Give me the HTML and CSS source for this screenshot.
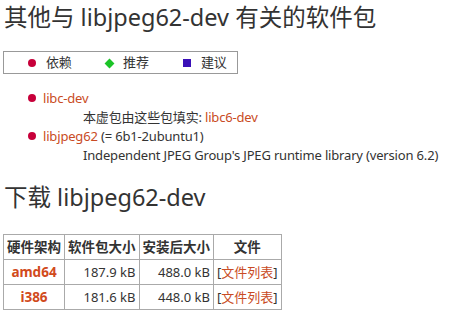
FILE: index.html
```html
<!DOCTYPE html>
<html lang="zh-CN">
<head>
    <meta charset="UTF-8">
    <title>libjpeg62-dev</title>
    <link rel="stylesheet" href="styles.css">
</head>
<body>
    <h2>其他与 libjpeg62-dev 有关的软件包</h2>

    <table class="legend">
        <tr>
            <td><span class="mark dep"></span>依赖</td>
            <td><span class="mark rec"></span>推荐</td>
            <td><span class="mark sug"></span>建议</td>
        </tr>
    </table>

    <ul class="uldep">
        <li>
            <a href="#">libc-dev</a>
            <div class="desc">本虚包由这些包填实: <a href="#">libc6-dev</a></div>
        </li>
        <li>
            <a href="#">libjpeg62</a> (= 6b1-2ubuntu1)
            <div class="desc">Independent JPEG Group's JPEG runtime library (version 6.2)</div>
        </li>
    </ul>

    <h2 class="dl">下载 libjpeg62-dev</h2>

    <table class="download">
        <tr>
            <th>硬件架构</th>
            <th>软件包大小</th>
            <th>安装后大小</th>
            <th class="files">文件</th>
        </tr>
        <tr>
            <th><a href="#">amd64</a></th>
            <td class="size">187.9&nbsp;kB</td>
            <td class="size">488.0&nbsp;kB</td>
            <td>[<a href="#">文件列表</a>]</td>
        </tr>
        <tr>
            <th><a href="#">i386</a></th>
            <td class="size">181.6&nbsp;kB</td>
            <td class="size">448.0&nbsp;kB</td>
            <td>[<a href="#">文件列表</a>]</td>
        </tr>
    </table>
</body>
</html>
```

FILE: styles.css
```css
body {
    margin: 0;
    padding: 0 4px;
    font-family: "Noto Sans", "Noto Sans CJK SC", sans-serif;
    font-size: 13px;
    letter-spacing: -0.17px;
    line-height: 19px;
    color: #333;
    background: #fff;
}
a {
    color: #c94b24;
    text-decoration: none;
}
h2 {
    font-size: 23.5px;
    font-weight: normal;
    letter-spacing: 0;
    line-height: 26px;
    margin: 4px 0 0;
    color: #333;
}
h2.dl {
    margin-top: 19px;
}
.legend {
    margin: 21px 0 0 -1px;
    width: 235px;
    border: 1px solid #999;
    border-collapse: collapse;
}
.legend td {
    padding: 1px 0 1px 24px;
    line-height: 19px;
}
.mark {
    display: inline-block;
    width: 8px;
    height: 8px;
    margin-right: 10px;
    vertical-align: 0;
}
.dep {
    background: #c7003a;
    border-radius: 50%;
}
.rec {
    width: 7px;
    height: 7px;
    background: #1bc427;
    transform: rotate(45deg);
}
.sug {
    background: #3a10b8;
}
.uldep {
    list-style: none;
    margin: 15px 0 0;
    padding: 0 0 0 39px;
}
.uldep li {
    position: relative;
}
.uldep li::before {
    content: "";
    position: absolute;
    left: -15px;
    top: 5px;
    width: 8px;
    height: 8px;
    border-radius: 50%;
    background: #c7003a;
}
.desc {
    padding-left: 40px;
}
.download {
    margin: 24px 0 0 -1px;
    border-collapse: collapse;
    letter-spacing: 0;
}
.download th,
.download td {
    border: 1px solid #aaa;
    padding: 3px 3px 2px;
    line-height: 19px;
}
.download th {
    font-weight: bold;
    font-size: 13.5px;
}
.download th a {
    color: #d14a1c;
}
.download .size {
    text-align: right;
}
.download .files {
    padding: 3px 16px 2px;
}
```
